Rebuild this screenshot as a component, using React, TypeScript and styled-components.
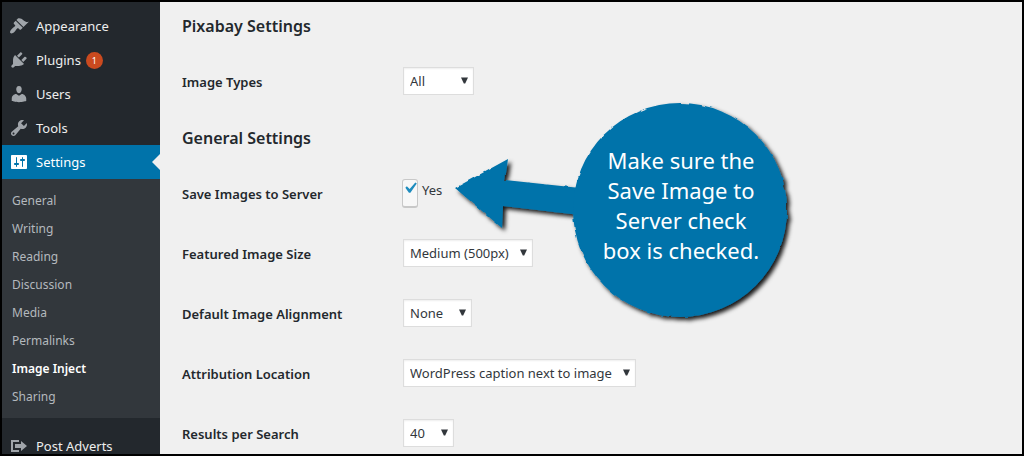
import React, { useState } from "react";
import styled, { createGlobalStyle } from "styled-components";

const GlobalStyle = createGlobalStyle`
  *, *::before, *::after { box-sizing: border-box; }
  body {
    margin: 0;
    background: #f0f0f0;
    color: #32373c;
    font-family: "Noto Sans", "Open Sans", sans-serif;
    font-size: 13px;
  }
`;

const Frame = styled.div`
  display: flex;
  height: 100vh;
  border: 2px solid #000;
  background: #f0f0f0;
  overflow: hidden;
`;

const Sidebar = styled.nav`
  flex: 0 0 158px;
  padding-top: 7px;
  background: #23282d;
`;

const MenuList = styled.ul`
  margin: 0;
  padding: 0;
  list-style: none;
`;

const MenuItem = styled.li<{ $spaced?: boolean }>`
  margin-top: ${(p) => (p.$spaced ? 11 : 0)}px;
`;

const MenuLink = styled.a<{ $current?: boolean }>`
  position: relative;
  display: flex;
  align-items: center;
  gap: 7px;
  height: 34px;
  padding-left: 7px;
  background: ${(p) => (p.$current ? "#0073aa" : "transparent")};
  color: ${(p) => (p.$current ? "#fff" : "#eee")};
  font-size: 13px;
  text-decoration: none;

  svg {
    fill: ${(p) => (p.$current ? "#fff" : "#a0a5aa")};
  }

  &::after {
    content: "";
    display: ${(p) => (p.$current ? "block" : "none")};
    position: absolute;
    right: 0;
    top: 9px;
    border: 8px solid transparent;
    border-left-width: 0;
    border-right-color: #f0f0f0;
  }
`;

const UpdateCount = styled.span`
  width: 17px;
  height: 17px;
  margin-left: -2px;
  border-radius: 9px;
  background: #ca4a1f;
  color: #fff;
  font-size: 9px;
  line-height: 17px;
  text-align: center;
`;

const SubMenu = styled.ul`
  margin: 0;
  padding: 8px 0 7px;
  background: #32373c;
  list-style: none;
`;

const SubLink = styled.a<{ $current?: boolean }>`
  display: block;
  padding-left: 10px;
  color: ${(p) => (p.$current ? "#fff" : "#b4b9be")};
  font-size: 12px;
  font-weight: ${(p) => (p.$current ? 600 : 400)};
  line-height: 28px;
  text-decoration: none;
`;

const Content = styled.main`
  position: relative;
  flex: 1;
  min-width: 0;
  padding: 12px 20px 0 22px;
`;

const Section = styled.section`
  & + & {
    margin-top: 14px;
  }
`;

const SectionTitle = styled.h2`
  margin: 0 0 14px;
  color: #23282d;
  font-size: 16px;
  font-weight: 600;
  line-height: 24px;
`;

const Row = styled.div`
  display: grid;
  grid-template-columns: 221px 1fr;
  align-items: center;
  height: 60px;
`;

const RowLabel = styled.label`
  color: #23282d;
  font-size: 13px;
  font-weight: 600;
`;

const SelectBox = styled.span<{ $width: number }>`
  position: relative;
  display: block;
  width: ${(p) => p.$width}px;
  margin-bottom: 2px;

  svg {
    position: absolute;
    right: 6px;
    top: 10px;
    fill: #32373c;
    pointer-events: none;
  }
`;

const Select = styled.select`
  display: block;
  width: 100%;
  height: 28px;
  padding: 0 0 0 6px;
  border: 1px solid #ddd;
  border-radius: 0;
  appearance: none;
  background: #fff;
  box-shadow: inset 0 1px 2px rgba(0, 0, 0, 0.07);
  color: #32373c;
  font: 13px "Noto Sans", "Open Sans", sans-serif;
`;

const CheckField = styled.span`
  display: flex;
  align-items: flex-start;
  gap: 4px;
  margin: 0 0 2px -1px;
`;

const CheckBox = styled.span`
  position: relative;
  width: 16px;
  height: 29px;

  svg {
    position: absolute;
    left: -3px;
    top: -2px;
    fill: #1e8cbe;
    pointer-events: none;
  }
`;

const CheckInput = styled.input`
  display: block;
  width: 16px;
  height: 29px;
  margin: 0;
  border: 1px solid #c8c8c8;
  border-bottom-width: 2px;
  border-radius: 3px;
  appearance: none;
  background: #f7f7f7;
`;

const CheckLabel = styled.label`
  font-size: 13px;
  line-height: 22px;
`;

const Callout = styled.aside`
  position: absolute;
  left: 290px;
  top: 88px;
  width: 350px;
  height: 240px;

  svg {
    display: block;
  }
`;

const CalloutText = styled.p`
  position: absolute;
  left: 126px;
  top: 55px;
  width: 210px;
  margin: 0;
  color: #fff;
  font-size: 22px;
  line-height: 30px;
  text-align: center;
`;

const icons = {
  appearance:
    "M14.48 11.06L7.41 3.99l1.5-1.5c.5-.56 2.3-.47 3.51.32 1.21.8 1.43 1.28 2.91 2.1 1.18.64 2.45 1.26 4.45.85zm-.71.71L6.7 4.7 4.93 6.47c-.39.39-.39 1.02 0 1.41l1.06 1.06c.39.39.39 1.03 0 1.42-.6.6-1.43 1.11-2.21 1.69-.35.26-.7.53-1.01.84C1.43 14.23.4 16.08 1.4 17.07c.99 1 2.84-.03 4.18-1.36.31-.31.58-.66.85-1.02.57-.78 1.08-1.61 1.69-2.21.39-.39 1.02-.39 1.41 0l1.06 1.06c.39.39 1.02.39 1.41 0z",
  plugins:
    "M13.11 4.36L9.87 7.6 8 5.73l3.24-3.24c.35-.34 1.05-.2 1.56.32.52.51.66 1.21.31 1.55zm-8 1.77l.91-1.12 9.01 9.01-1.19.84c-.71.71-2.63 1.16-3.82 1.16H6.14L4.9 17.26c-.59.59-1.54.59-2.12 0-.59-.58-.59-1.53 0-2.12l1.24-1.24v-3.88c0-1.13.4-3.19 1.09-3.89zm7.26 3.97l3.24-3.24c.34-.35 1.04-.21 1.55.31.52.51.66 1.21.31 1.55l-3.24 3.25z",
  users:
    "M10 9.25c-2.27 0-2.73-3.44-2.73-3.44C7 4.02 7.82 2 9.97 2c2.16 0 2.98 2.02 2.71 3.81 0 0-.41 3.44-2.68 3.44zm0 2.57L12.72 10c2.39 0 4.52 2.33 4.52 4.53v2.49s-3.65 1.13-7.24 1.13c-3.65 0-7.24-1.13-7.24-1.13v-2.49c0-2.25 1.94-4.48 4.47-4.48z",
  tools:
    "M16.68 9.77c-1.34 1.34-3.3 1.67-4.95.99l-5.41 6.52c-.99.99-2.59.99-3.58 0s-.99-2.59 0-3.57l6.52-5.42c-.68-1.65-.35-3.61.99-4.95 1.28-1.28 3.12-1.62 4.72-1.06l-2.89 2.89 2.82 2.82 2.86-2.87c.53 1.58.18 3.39-1.08 4.65zM3.81 16.21c.4.39 1.04.39 1.43 0 .4-.4.4-1.04 0-1.43-.39-.4-1.03-.4-1.43 0-.39.39-.39 1.03 0 1.43z",
  settings:
    "M18 16V4c0-.55-.45-1-1-1H3c-.55 0-1 .45-1 1v12c0 .55.45 1 1 1h14c.55 0 1-.45 1-1zM8 11h1c.55 0 1 .45 1 1s-.45 1-1 1H8v1.5c0 .28-.22.5-.5.5s-.5-.22-.5-.5V13H6c-.55 0-1-.45-1-1s.45-1 1-1h1V5.5c0-.28.22-.5.5-.5s.5.22.5.5V11zm5-2h-1c-.55 0-1-.45-1-1s.45-1 1-1h1V5.5c0-.28.22-.5.5-.5s.5.22.5.5V7h1c.55 0 1 .45 1 1s-.45 1-1 1h-1v5.5c0 .28-.22.5-.5.5s-.5-.22-.5-.5V9z",
  migrate: "M4 6h6V4H2v12.01h8V14H4V6zm2 2h6V5l6 5-6 5v-3H6V8z",
  check: "M14.83 4.89l1.34.94-5.81 8.38H9.02L5.78 9.67l1.34-1.25 2.57 2.4z",
};

const Icon = ({ path, size = 20 }: { path: string; size?: number }) => (
  <svg width={size} height={size} viewBox="0 0 20 20" aria-hidden="true">
    <path d={path} />
  </svg>
);

type MenuEntry = {
  label: string;
  icon: string;
  count?: number;
  spaced?: boolean;
  children?: string[];
};

const menu: MenuEntry[] = [
  { label: "Appearance", icon: icons.appearance },
  { label: "Plugins", icon: icons.plugins, count: 1 },
  { label: "Users", icon: icons.users },
  { label: "Tools", icon: icons.tools },
  {
    label: "Settings",
    icon: icons.settings,
    children: [
      "General",
      "Writing",
      "Reading",
      "Discussion",
      "Media",
      "Permalinks",
      "Image Inject",
      "Sharing",
    ],
  },
  { label: "Post Adverts", icon: icons.migrate, spaced: true },
];

type SelectRowProps = {
  id: string;
  label: string;
  value: string;
  width: number;
};

const SelectRow = ({ id, label, value, width }: SelectRowProps) => (
  <Row>
    <RowLabel htmlFor={id}>{label}</RowLabel>
    <SelectBox $width={width}>
      <Select id={id}>
        <option>{value}</option>
      </Select>
      <svg width="7" height="7" viewBox="0 0 7 7" aria-hidden="true">
        <path d="M0 0.5h7L4.2 6.5H2.8z" />
      </svg>
    </SelectBox>
  </Row>
);

export default function App() {
  const [save, setSave] = useState(true);

  return (
    <>
      <GlobalStyle />
      <Frame>
        <Sidebar>
          <MenuList>
            {menu.map((item) => (
              <MenuItem key={item.label} $spaced={item.spaced}>
                <MenuLink href="#" $current={!!item.children}>
                  <Icon path={item.icon} />
                  <span>{item.label}</span>
                  {item.count && <UpdateCount>{item.count}</UpdateCount>}
                </MenuLink>
                {item.children && (
                  <SubMenu>
                    {item.children.map((child) => (
                      <li key={child}>
                        <SubLink href="#" $current={child === "Image Inject"}>
                          {child}
                        </SubLink>
                      </li>
                    ))}
                  </SubMenu>
                )}
              </MenuItem>
            ))}
          </MenuList>
        </Sidebar>

        <Content>
          <Section>
            <SectionTitle>Pixabay Settings</SectionTitle>
            <SelectRow id="types" label="Image Types" value="All" width={71} />
          </Section>
          <Section>
            <SectionTitle>General Settings</SectionTitle>
            <Row>
              <RowLabel as="span">Save Images to Server</RowLabel>
              <CheckField>
                <CheckBox>
                  <CheckInput
                    id="save"
                    type="checkbox"
                    checked={save}
                    onChange={(e) => setSave(e.target.checked)}
                  />
                  {save && <Icon path={icons.check} size={22} />}
                </CheckBox>
                <CheckLabel htmlFor="save">Yes</CheckLabel>
              </CheckField>
            </Row>
            <SelectRow id="size" label="Featured Image Size" value="Medium (500px)" width={130} />
            <SelectRow id="align" label="Default Image Alignment" value="None" width={69} />
            <SelectRow
              id="attribution"
              label="Attribution Location"
              value="WordPress caption next to image"
              width={233}
            />
            <SelectRow id="results" label="Results per Search" value="40" width={51} />
          </Section>

          <Callout>
            <svg width="350" height="240" viewBox="450 90 350 240" aria-hidden="true">
              <defs>
                <filter id="cutout" x="-5%" y="-5%" width="112%" height="112%">
                  <feTurbulence type="fractalNoise" baseFrequency="0.12" numOctaves="1" seed="4" result="noise" />
                  <feDisplacementMap
                    in="SourceGraphic"
                    in2="noise"
                    scale="3"
                    xChannelSelector="R"
                    yChannelSelector="G"
                    result="torn"
                  />
                  <feGaussianBlur in="torn" stdDeviation="0.4" result="shape" />
                  <feDropShadow in="shape" dx="3" dy="3" stdDeviation="2" floodColor="#000" floodOpacity="0.9" />
                </filter>
              </defs>
              <g fill="#0073aa" filter="url(#cutout)">
                <path d="M455 188L508 159L505 180L580 188V215L503 206L502 228Z" />
                <circle cx="680" cy="210" r="107" />
              </g>
            </svg>
            <CalloutText>
              Make sure the
              <br />
              Save Image to
              <br />
              Server check
              <br />
              box is checked.
            </CalloutText>
          </Callout>
        </Content>
      </Frame>
    </>
  );
}
